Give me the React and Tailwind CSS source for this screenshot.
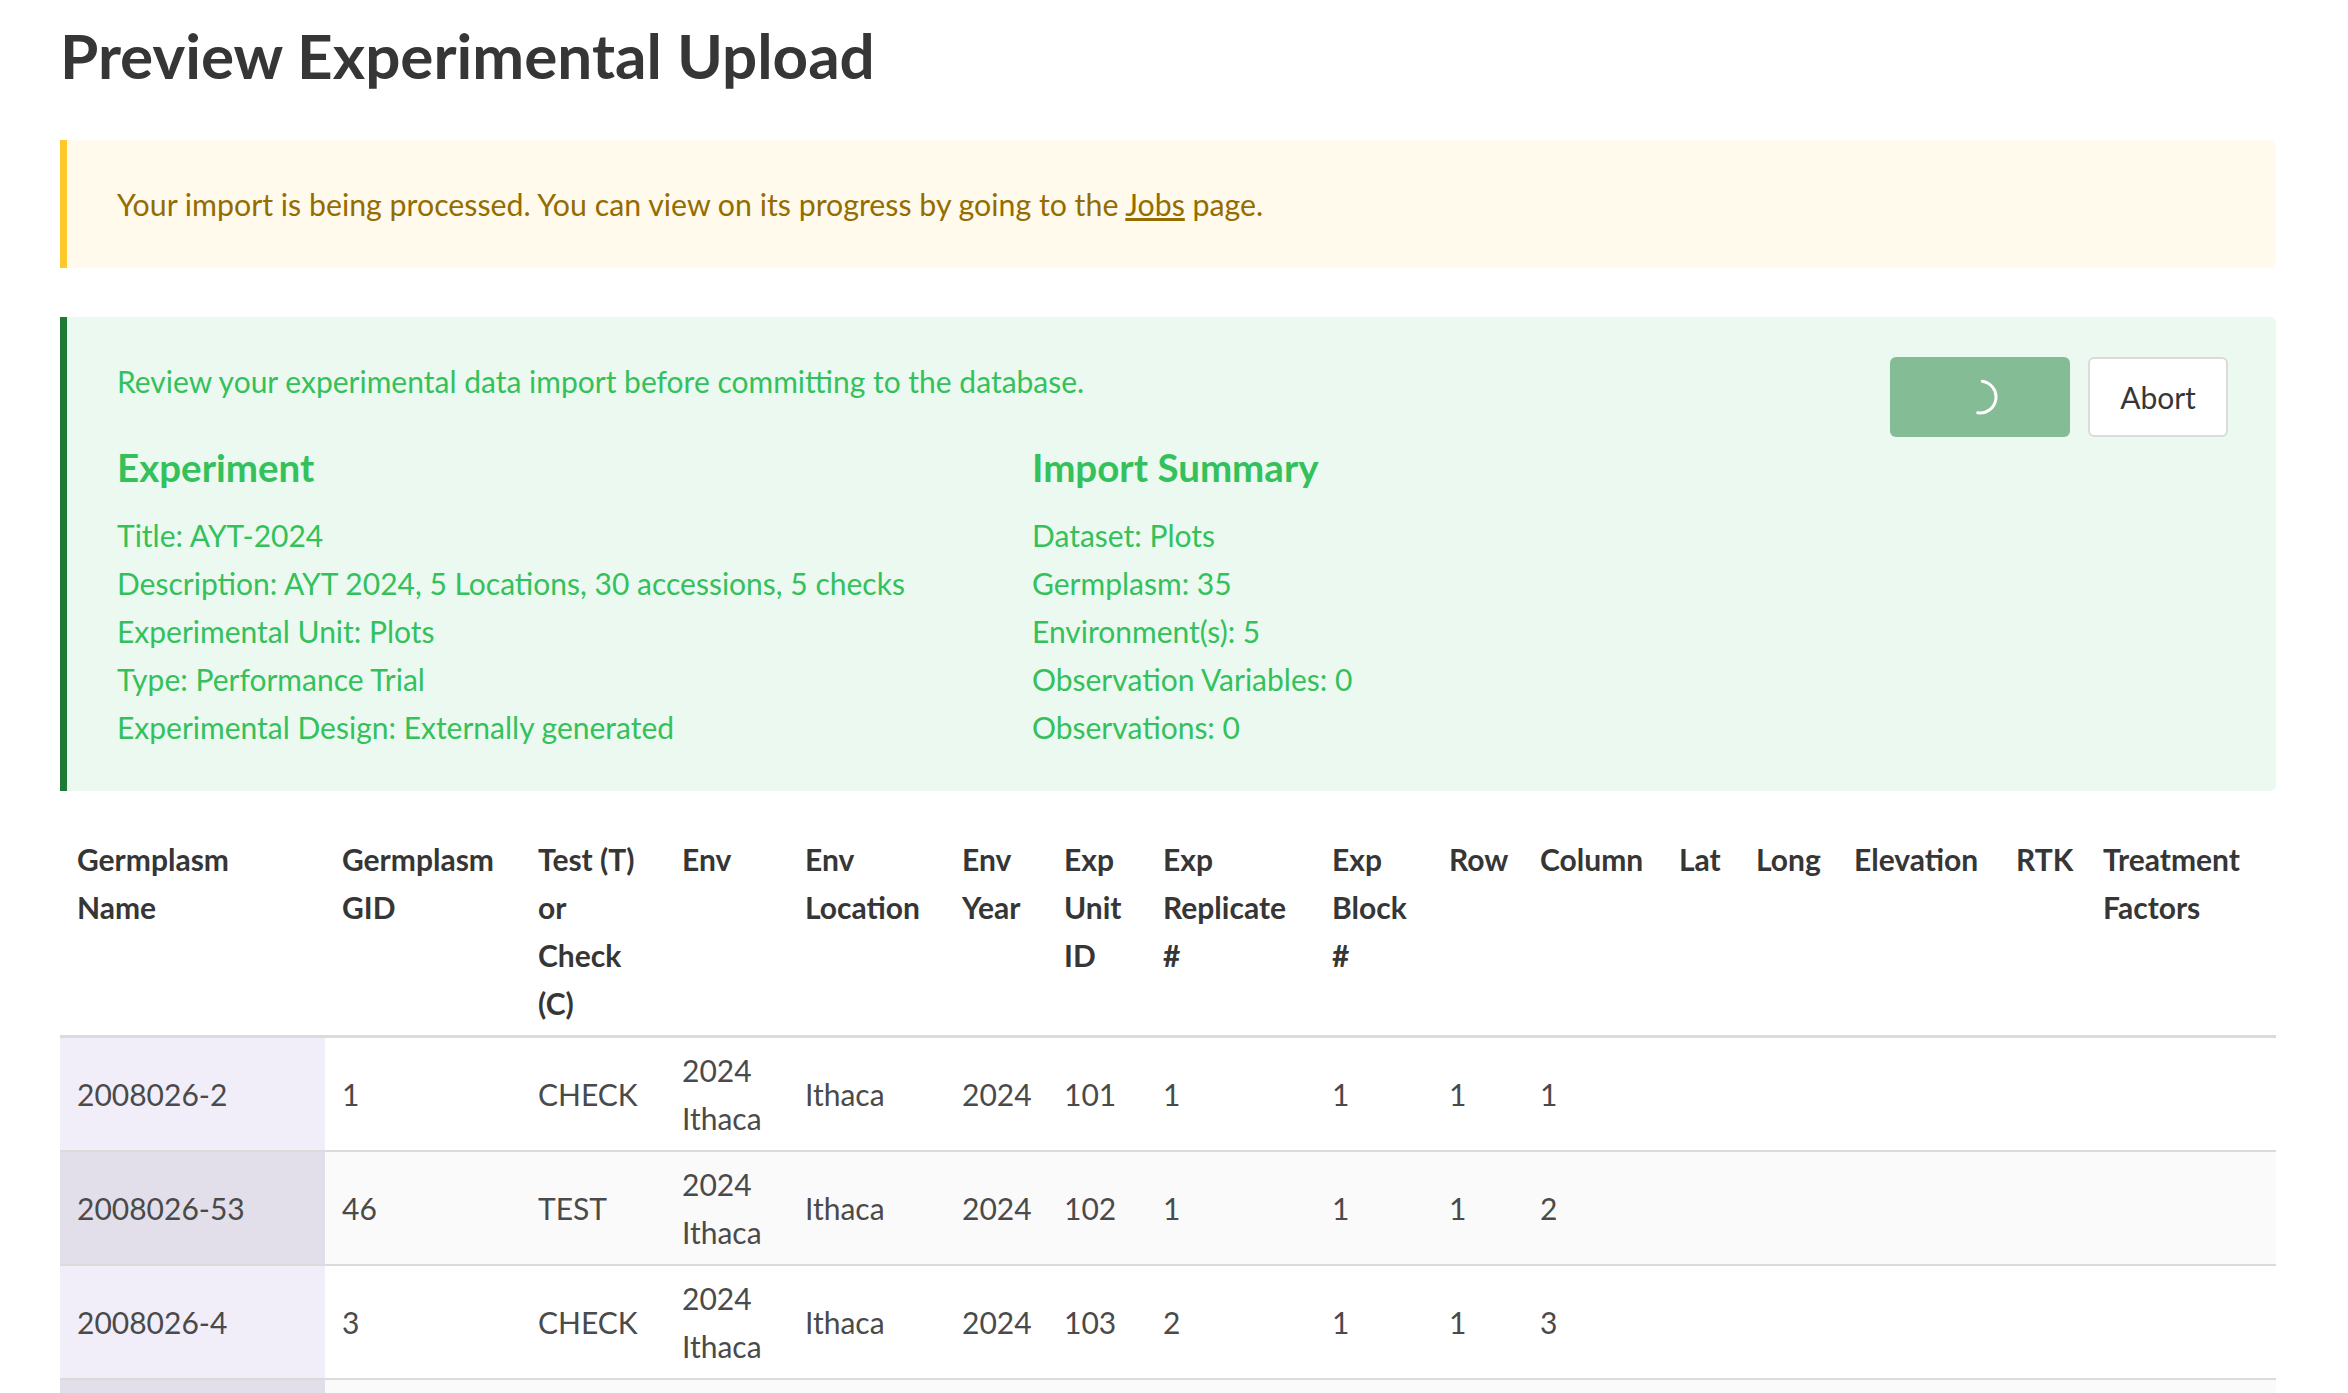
const COLS = [
  'w-[265px]', 'w-[196px]', 'w-[144px]', 'w-[123px]', 'w-[157px]', 'w-[102px]', 'w-[99px]', 'w-[169px]',
  'w-[117px]', 'w-[91px]', 'w-[139px]', 'w-[77px]', 'w-[98px]', 'w-[162px]', 'w-[87px]', 'w-[190px]',
];

const HEADERS = [
  ['Germplasm', 'Name'],
  ['Germplasm', 'GID'],
  ['Test (T)', 'or', 'Check', '(C)'],
  ['Env'],
  ['Env', 'Location'],
  ['Env', 'Year'],
  ['Exp', 'Unit', 'ID'],
  ['Exp', 'Replicate', '#'],
  ['Exp', 'Block', '#'],
  ['Row'],
  ['Column'],
  ['Lat'],
  ['Long'],
  ['Elevation'],
  ['RTK'],
  ['Treatment', 'Factors'],
];

const ROWS = [
  ['2008026-2', '1', 'CHECK', '101', '1', '1', '1', '1'],
  ['2008026-53', '46', 'TEST', '102', '1', '1', '1', '2'],
  ['2008026-4', '3', 'CHECK', '103', '2', '1', '1', '3'],
];

const experiment = [
  'Title: AYT-2024',
  'Description: AYT 2024, 5 Locations, 30 accessions, 5 checks',
  'Experimental Unit: Plots',
  'Type: Performance Trial',
  'Experimental Design: Externally generated',
];

const summary = [
  'Dataset: Plots',
  'Germplasm: 35',
  'Environment(s): 5',
  'Observation Variables: 0',
  'Observations: 0',
];

const Spinner = () => (
  <svg width="36" height="36" viewBox="0 0 36 36" fill="none">
    <path d="M18 2 A16 16 0 0 1 18 34" stroke="white" strokeWidth="3" strokeLinecap="round" transform="rotate(8 18 18)" />
  </svg>
);

const App = () => {
  return (
    <div className="min-h-screen bg-white font-['Lato',sans-serif] text-[30px] leading-[48px] text-[#4a4a4a]">
      <div className="w-[2216px] ml-[60px] pt-[19px]">
        <h1 className="text-[62px] leading-[72px] font-bold text-[#363636] mb-[49px]">
          Preview Experimental Upload
        </h1>

        <div className="rounded-r-[6px] bg-[#fffaeb] border-l-[7px] border-[#fdc829] pl-[50px] py-[40px] text-[#946c00] text-[30.3px]">
          Your import is being processed. You can view on its progress by going to the{' '}
          <a className="underline">Jobs</a> page.
        </div>

        <div className="mt-[49px] rounded-r-[6px] bg-[#ecf9f1] border-l-[7px] border-[#1f7a35] pl-[50px] pr-[48px] py-[40px] text-[#34c15b]">
          <div className="flex items-start justify-between">
            <p>Review your experimental data import before committing to the database.</p>
            <div className="flex gap-[18px]">
              <button className="w-[180px] h-[80px] rounded-[6px] bg-[#84bc95] flex items-center justify-center">
                <Spinner />
              </button>
              <button className="w-[140px] h-[80px] rounded-[6px] bg-white border-2 border-[#dbdbdb] text-[#363636]">
                Abort
              </button>
            </div>
          </div>

          <div className="grid grid-cols-[915px_1fr] mt-[8px]">
            <div>
              <h2 className="text-[38.5px] leading-[45px] font-bold mb-[21px]">Experiment</h2>
              {experiment.map((line) => (
                <p key={line}>{line}</p>
              ))}
            </div>
            <div>
              <h2 className="text-[38.5px] leading-[45px] font-bold mb-[21px]">Import Summary</h2>
              {summary.map((line) => (
                <p key={line}>{line}</p>
              ))}
            </div>
          </div>
        </div>

        <table className="mt-[36px] w-[2216px] table-fixed border-collapse">
          <colgroup>
            {COLS.map((c, i) => (
              <col key={i} className={c} />
            ))}
          </colgroup>
          <thead>
            <tr>
              {HEADERS.map((lines, i) => (
                <th
                  key={i}
                  className="pl-[17px] pr-4 py-2 text-left align-top font-bold text-[#363636] whitespace-nowrap border-b-[3px] border-[#dbdbdb]"
                >
                  {lines.map((l, j) => (
                    <div key={j}>{l}</div>
                  ))}
                </th>
              ))}
            </tr>
          </thead>
          <tbody>
            {ROWS.map((r, i) => {
              const even = i % 2 === 1;
              const cells = [r[1], r[2], null, 'Ithaca', '2024', r[3], r[4], r[5], r[6], r[7], '', '', '', '', ''];
              return (
                <tr key={r[0]} className={even ? 'bg-[#fafafa]' : 'bg-white'}>
                  <td
                    className={`pl-[17px] pr-4 py-2 align-middle whitespace-nowrap border-b-2 border-[#dbdbdb] ${
                      even ? 'bg-[#e2dfea]' : 'bg-[#f1eefa]'
                    }`}
                  >
                    {r[0]}
                  </td>
                  {cells.map((c, j) => (
                    <td key={j} className="pl-[17px] pr-4 py-2 align-middle whitespace-nowrap border-b-2 border-[#dbdbdb]">
                      {c === null ? (
                        <>
                          <div>2024</div>
                          <div>Ithaca</div>
                        </>
                      ) : (
                        c
                      )}
                    </td>
                  ))}
                </tr>
              );
            })}
            <tr className="bg-[#fafafa] h-[114px]">
              <td className="bg-[#e2dfea]" />
              {COLS.slice(1).map((c) => (
                <td key={c} />
              ))}
            </tr>
          </tbody>
        </table>
      </div>
    </div>
  );
};

export default App;
